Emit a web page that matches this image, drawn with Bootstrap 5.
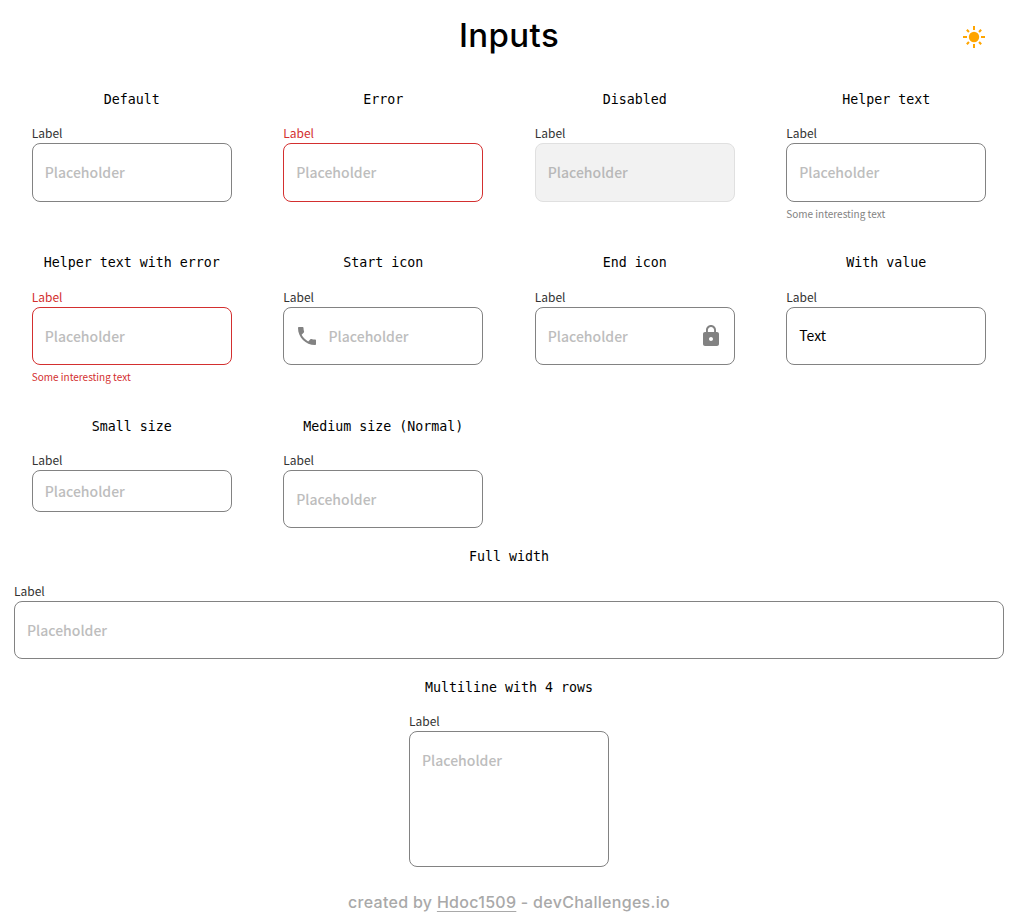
<!DOCTYPE html>
<html lang="en">
<head>
<meta charset="utf-8">
<meta name="viewport" content="width=device-width, initial-scale=1">
<title>Inputs</title>
<link href="https://cdn.jsdelivr.net/npm/bootstrap@5.3.0/dist/css/bootstrap.min.css" rel="stylesheet">
<style>
body{background:#fff;color:#000;font-family:"Noto Sans CJK JP",sans-serif;padding:0 12px 0 14px;height:920px;overflow:hidden}
.top-bar{height:89px;padding-top:11px}
.top-bar h1{font:500 33px/48px Inter,sans-serif;letter-spacing:.4px;margin:0}
.sun{right:18px;top:25px}
.gallery{display:grid;grid-template-columns:repeat(4,1fr);column-gap:16px;grid-template-rows:163.4px 163.4px 130.1px}
.caption{font:13.3px/21px "DejaVu Sans Mono",monospace;text-align:center;white-space:pre;margin:0 0 14px}
.caption-wide{margin-bottom:14.8px}
.field{width:200px;margin:0 auto}
.field.wide{width:100%}
.field label{display:block;font-size:12px;line-height:18.4px;color:#333;height:19.3px}
.field .form-control{height:58.3px;border:1px solid #828282;border-radius:8px;padding:0 12px;font-size:14px;font-weight:500;color:#000;background:#fff}
.field .form-control::placeholder{color:#bdbdbd;opacity:1}
.field .form-control.short{height:41.6px}
.field .form-control.filled{font-weight:400;padding-bottom:1px}
.field textarea.form-control{height:136px;padding-top:17px;resize:none;overflow:hidden;line-height:22px}
.field .form-control:disabled{background:#f2f2f2;border-color:#e0e0e0}
.field .form-control:disabled::placeholder{color:#b8b8b8}
.bad label,.field.bad .hint{color:#d32f2f}
.bad .form-control{border-color:#d32f2f}
.row-two label{line-height:19.3px}
.hint{font-size:10px;line-height:15px;color:#828282;margin-top:4.4px}
.icon-s{left:12px;top:17px}
.icon-e{right:12px;top:17px}
.field .has-start{padding-left:44.3px}
.multi{margin-top:17.6px}
footer{font:500 16px/24px Inter,sans-serif;letter-spacing:.29px;color:#a9a9a9;text-align:center;margin-top:22.5px}
footer a{color:inherit;text-underline-offset:3px;text-decoration-thickness:1px}
footer a:hover{color:#828282}
</style>
</head>
<body>
<header class="top-bar position-relative text-center">
<h1>Inputs</h1>
<svg class="sun position-absolute" width="24" height="24" viewBox="0 0 24 24" fill="orange"><circle cx="12" cy="12" r="5.2"/><path d="M11 1h2v4h-2zM11 19h2v4h-2zM1 11h4v2H1zM19 11h4v2h-4z"/><path d="M4.1 5.6l1.5-1.5 2.1 2.1-1.5 1.5zM16.3 17.8l1.5-1.5 2.1 2.1-1.5 1.5zM18.4 4.1l1.5 1.5-2.1 2.1-1.5-1.5zM6.2 16.3l1.5 1.5-2.1 2.1-1.5-1.5z"/></svg>
</header>
<main>
<div class="gallery">
<section><h2 class="caption">Default</h2><div class="field"><label for="a">Label</label><input id="a" class="form-control" placeholder="Placeholder"></div></section>
<section><h2 class="caption">Error</h2><div class="field bad"><label for="b">Label</label><input id="b" class="form-control" placeholder="Placeholder"></div></section>
<section><h2 class="caption">Disabled</h2><div class="field"><label for="c">Label</label><input id="c" class="form-control" placeholder="Placeholder" disabled></div></section>
<section><h2 class="caption">Helper text</h2><div class="field"><label for="d">Label</label><input id="d" class="form-control" placeholder="Placeholder"><div class="hint">Some interesting text</div></div></section>
<section class="row-two"><h2 class="caption">Helper text with error</h2><div class="field bad"><label for="e">Label</label><input id="e" class="form-control" placeholder="Placeholder"><div class="hint">Some interesting text</div></div></section>
<section class="row-two"><h2 class="caption">Start icon</h2><div class="field"><label for="f">Label</label><div class="position-relative"><input id="f" class="form-control has-start" placeholder="Placeholder"><svg class="icon-s position-absolute" width="24" height="24" viewBox="0 0 24 24" fill="#828282"><path d="M6.62 10.79c1.44 2.83 3.76 5.14 6.59 6.59l2.2-2.2c.27-.27.67-.36 1.02-.24 1.12.37 2.33.57 3.57.57.55 0 1 .45 1 1V20c0 .55-.45 1-1 1-9.39 0-17-7.61-17-17 0-.55.45-1 1-1h3.5c.55 0 1 .45 1 1 0 1.25.2 2.45.57 3.57.11.35.03.74-.25 1.02l-2.2 2.2z"/></svg></div></div></section>
<section class="row-two"><h2 class="caption">End icon</h2><div class="field"><label for="g">Label</label><div class="position-relative"><input id="g" class="form-control" placeholder="Placeholder"><svg class="icon-e position-absolute" width="24" height="24" viewBox="0 0 24 24" fill="#828282"><path d="M18 8h-1V6c0-2.76-2.24-5-5-5S7 3.24 7 6v2H6c-1.1 0-2 .9-2 2v10c0 1.1.9 2 2 2h12c1.1 0 2-.9 2-2V10c0-1.1-.9-2-2-2zm-6 9c-1.1 0-2-.9-2-2s.9-2 2-2 2 .9 2 2-.9 2-2 2zm3.1-9H8.9V6c0-1.71 1.39-3.1 3.1-3.1s3.1 1.39 3.1 3.1v2z"/></svg></div></div></section>
<section class="row-two"><h2 class="caption">With value</h2><div class="field"><label for="h">Label</label><input id="h" class="form-control filled" value="Text"></div></section>
<section><h2 class="caption">Small size</h2><div class="field"><label for="i">Label</label><input id="i" class="form-control short" placeholder="Placeholder"></div></section>
<section><h2 class="caption">Medium size (Normal)</h2><div class="field"><label for="j">Label</label><input id="j" class="form-control" placeholder="Placeholder"></div></section>
</div>
<section><h2 class="caption caption-wide">Full width</h2><div class="field wide"><label for="k">Label</label><input id="k" class="form-control" placeholder="Placeholder"></div></section>
<section class="multi"><h2 class="caption">Multiline with 4 rows</h2><div class="field"><label for="l">Label</label><textarea id="l" class="form-control" rows="4" placeholder="Placeholder"></textarea></div></section>
</main>
<footer>created by <a href="#">Hdoc1509</a> - devChallenges.io</footer>
<script src="https://cdn.jsdelivr.net/npm/bootstrap@5.3.0/dist/js/bootstrap.bundle.min.js"></script>
</body>
</html>
